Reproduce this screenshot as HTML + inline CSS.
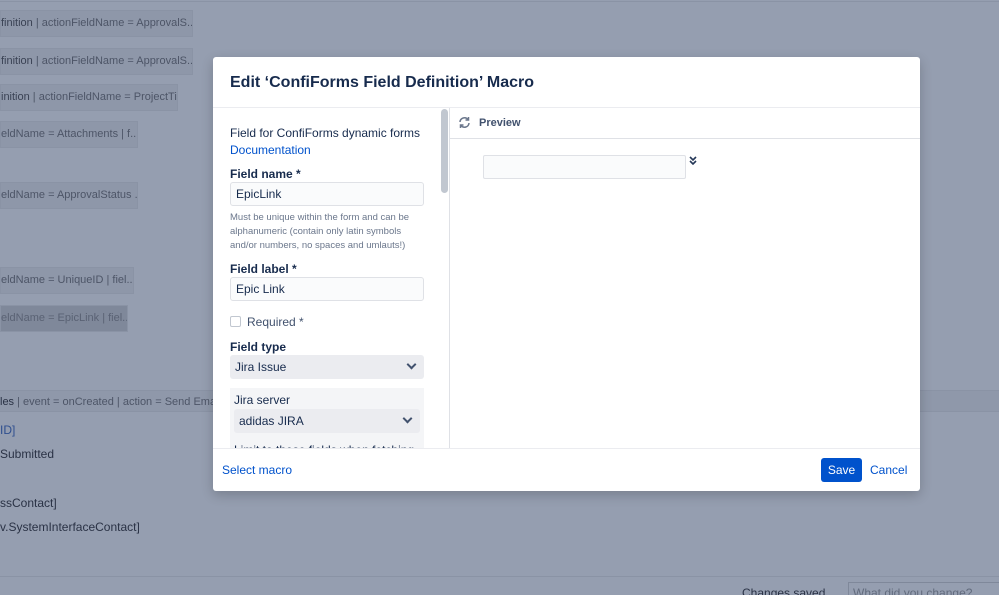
<!DOCTYPE html>
<html><head><style>
*{box-sizing:border-box;margin:0;padding:0}
html,body{width:999px;height:595px;overflow:hidden}
body{background:#959eb0;font-family:"Liberation Sans",sans-serif;position:relative;color:#172b4d}
.ab{position:absolute}
.blk{position:absolute;left:0;height:27px;background:#8e97a9;border:1px solid #8a93a5;font-size:11px;color:#3a4254;line-height:25px;white-space:nowrap;overflow:hidden}
.blk span{color:#4d5567}
.t{position:absolute;font-size:12px;color:#2a3245;white-space:nowrap}
.modal{position:absolute;left:213px;top:57px;width:707px;height:434px;background:#fff;border-radius:3px;box-shadow:0 4px 12px rgba(0,0,0,.2)}
.lbl{position:absolute;left:17px;font-size:12px;font-weight:bold;color:#172b4d}
.inp{position:absolute;left:17px;width:194px;height:24px;border:1px solid #dfe1e6;border-radius:3px;background:#fafbfc;font-size:12px;padding:4px 5px;color:#172b4d}
.sel{position:absolute;background:#ebecf0;border-radius:3px;font-size:12px;color:#172b4d}
.chev{position:absolute;width:7px;height:7px;border-right:2px solid #42526e;border-bottom:2px solid #42526e;transform:rotate(45deg)}
</style></head><body>
<div class="ab" style="left:0;top:1px;width:999px;height:1px;background:#8a93a5"></div>
<div class="blk" style="top:10px;width:193px">finition <span>| actionFieldName = ApprovalS...</span></div>
<div class="blk" style="top:48px;width:193px">finition <span>| actionFieldName = ApprovalS...</span></div>
<div class="blk" style="top:84px;width:178px">inition <span>| actionFieldName = ProjectTi...</span></div>
<div class="blk" style="top:121px;width:138px"><span>eldName = Attachments | f...</span></div>
<div class="blk" style="top:182px;width:138px"><span>eldName = ApprovalStatus ...</span></div>
<div class="blk" style="top:267px;width:134px"><span>eldName = UniqueID | fiel...</span></div>
<div class="blk" style="top:305px;width:128px;background:#7f889a"><span style="color:#5a6274">eldName = EpicLink | fiel...</span></div>
<div class="ab" style="left:0;top:390px;width:999px;height:22px;background:#8f98aa;border-top:1px solid #8a93a5;border-bottom:1px solid #8a93a5"></div>
<div class="t" style="top:396px;left:0;font-size:11px">les <span style="color:#4d5567">| event = onCreated | action = Send Email |</span></div>
<div class="t" style="top:423px;left:0;color:#2f4f8f">ID]</div>
<div class="t" style="top:447px;left:0">Submitted</div>
<div class="t" style="top:496px;left:0">ssContact]</div>
<div class="t" style="top:520px;left:0">v.SystemInterfaceContact]</div>
<div class="ab" style="left:0;top:576px;width:999px;height:1px;background:#8a93a5"></div>
<div class="t" style="top:586px;left:742px;color:#2a3245">Changes saved</div>
<div class="ab" style="left:848px;top:582px;width:160px;height:20px;border:1px solid #7f889a;font-size:12px;color:#626b7d;padding:3px 4px">What did you change?</div>

<div class="modal">
 <div class="ab" style="left:17px;top:17px;font-size:16px;font-weight:bold;color:#172b4d">Edit ‘ConfiForms Field Definition’ Macro</div>
 <div class="ab" style="left:0;top:50px;width:707px;height:1px;background:#ebecf0"></div>
 <div class="ab" style="left:236px;top:51px;width:1px;height:340px;background:#dfe1e6"></div>
 <div class="ab" style="left:228px;top:52px;width:7px;height:84px;background:#c1c7d0;border-radius:4px"></div>
 <div class="ab" style="left:17px;top:69px;font-size:12px;color:#172b4d">Field for ConfiForms dynamic forms</div>
 <div class="ab" style="left:17px;top:86px;font-size:12px;color:#0052cc">Documentation</div>
 <div class="lbl" style="top:110px">Field name *</div>
 <div class="inp" style="top:125px">EpicLink</div>
 <div class="ab" style="left:17px;top:154px;font-size:9.5px;line-height:14px;color:#6b778c;width:200px">Must be unique within the form and can be alphanumeric (contain only latin symbols and/or numbers, no spaces and umlauts!)</div>
 <div class="lbl" style="top:205px">Field label *</div>
 <div class="inp" style="top:220px">Epic Link</div>
 <div class="ab" style="left:17px;top:259px;width:11px;height:11px;border:1px solid #c1c7d0;border-radius:2px"></div>
 <div class="ab" style="left:34px;top:258px;font-size:12px;color:#42526e">Required *</div>
 <div class="lbl" style="top:283px">Field type</div>
 <div class="sel" style="left:17px;top:298px;width:194px;height:24px;padding:5px 5px">Jira Issue<div class="chev" style="right:9px;top:6px"></div></div>
 <div class="ab" style="left:17px;top:331px;width:194px;height:60px;background:#f4f5f7;overflow:hidden">
  <div class="ab" style="left:4px;top:5px;font-size:12px;color:#172b4d">Jira server</div>
  <div class="sel" style="left:4px;top:21px;width:186px;height:24px;padding:5px 5px">adidas JIRA<div class="chev" style="right:9px;top:6px"></div></div>
  <div class="ab" style="left:4px;top:55px;font-size:12px;color:#172b4d">Limit to these fields when fetching</div>
 </div>
 <svg class="ab" style="left:245px;top:59px" width="13" height="13" viewBox="0 0 13 13" fill="none" stroke="#6b778c" stroke-width="1.5"><path d="M2 6A4.5 4.5 0 0 1 10 3.5M11 7A4.5 4.5 0 0 1 3 9.5"/><path d="M10.5 1v3h-3M2.5 12V9h3"/></svg>
 <div class="ab" style="left:266px;top:60px;font-size:11px;font-weight:bold;color:#42526e">Preview</div>
 <div class="ab" style="left:237px;top:81px;width:470px;height:1px;background:#dfe1e6"></div>
 <div class="ab" style="left:270px;top:98px;width:203px;height:24px;border:1px solid #dfe1e6;border-radius:2px;background:#fafbfc"></div>
 <svg class="ab" style="left:476px;top:99px" width="8" height="9" viewBox="0 0 8 9" fill="none" stroke="#253858" stroke-width="1.6"><path d="M1 1l3 3 3-3M1 5l3 3 3-3"/></svg>
 <div class="ab" style="left:0;top:391px;width:707px;height:1px;background:#ebecf0"></div>
 <div class="ab" style="left:9px;top:406px;font-size:12px;color:#0052cc">Select macro</div>
 <div class="ab" style="left:608px;top:401px;width:41px;height:24px;background:#0052cc;border-radius:3px;color:#fff;font-size:12px;text-align:center;line-height:24px">Save</div>
 <div class="ab" style="left:657px;top:406px;font-size:12px;color:#0052cc">Cancel</div>
</div>
</body></html>
